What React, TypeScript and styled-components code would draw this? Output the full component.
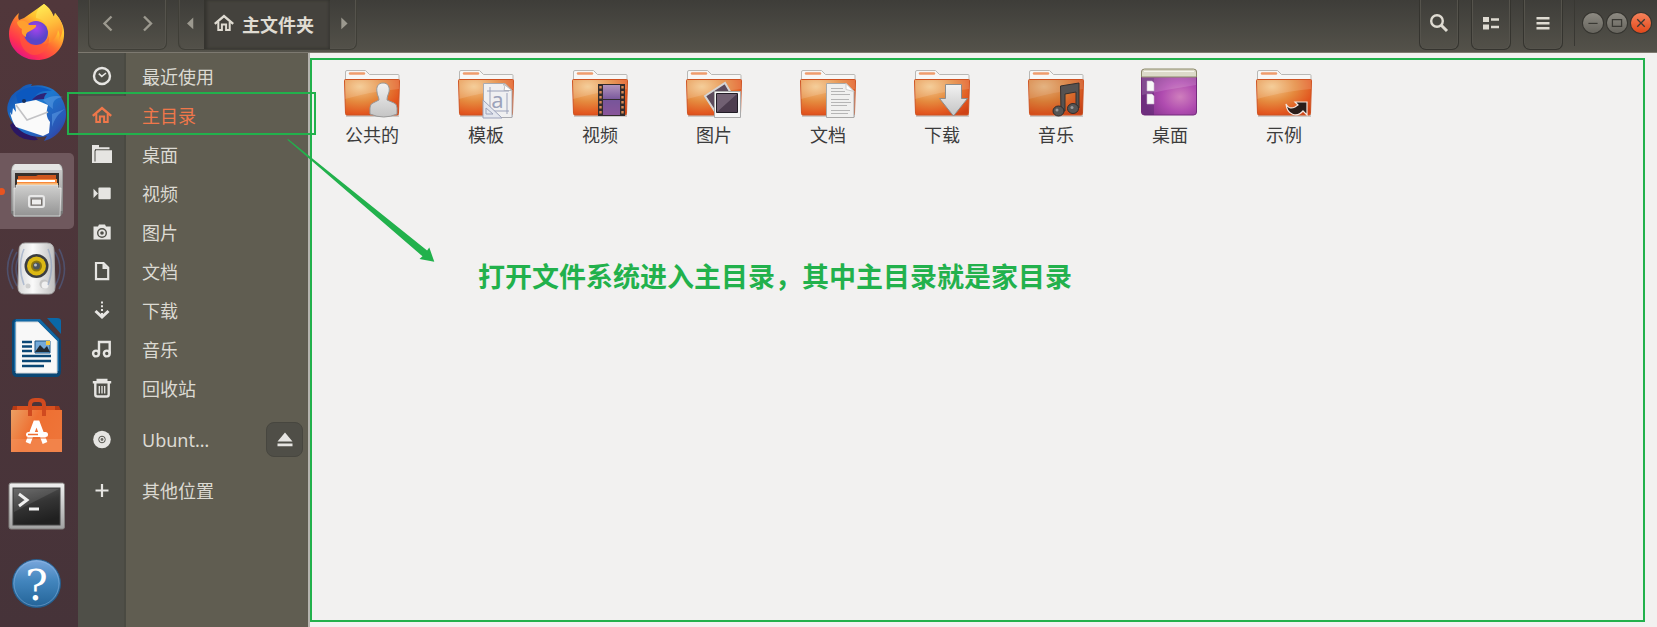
import React from 'react';
import styled, { createGlobalStyle, css } from 'styled-components';

const GREEN = '#22b14c';

const GlobalStyle = createGlobalStyle`
  * { box-sizing: border-box; }
  body {
    margin: 0;
    font-family: "Noto Sans", "Noto Sans CJK SC", sans-serif;
    font-size: 18px;
    background: #f2f1f0;
  }
  button { font: inherit; color: inherit; padding: 0; border: 0; background: none; }
  ul { list-style: none; margin: 0; padding: 0; }
  svg { display: block; flex: none; }
`;

const Desktop = styled.div`
  display: grid;
  grid-template-columns: 78px 1fr;
  min-height: 100vh;
`;

/* ---------- dock ---------- */

const Dock = styled.nav`
  background: linear-gradient(#51373b, #463339);
  overflow: hidden;
`;

const DockList = styled.ul`
  display: flex;
  flex-direction: column;
  gap: 3px;
  margin-top: -5px;
`;

const DockButton = styled.button<{ $active?: boolean }>`
  position: relative;
  display: block;
  width: 74px;
  height: 76px;
  border-radius: 0 5px 5px 0;
  ${(p) =>
    p.$active &&
    css`
      background: #6f585d;
      &::before {
        content: '';
        position: absolute;
        left: -2px;
        top: 35px;
        width: 7px;
        height: 7px;
        border-radius: 50%;
        background: #e95420;
      }
    `}
`;

/* ---------- window ---------- */

const Window = styled.div`
  display: flex;
  flex-direction: column;
  min-width: 0;
`;

const HeaderBar = styled.header`
  display: flex;
  align-items: flex-start;
  gap: 11px;
  height: 53px;
  padding: 0 6px 0 10px;
  color: #dfdbd2;
  background: linear-gradient(#3e3d39, #54524a);
  border-bottom: 1px solid #7d7970;
`;

const ButtonGroup = styled.div`
  display: flex;
  height: 50px;
  border: 1px solid #3f3e37;
  border-top: 0;
  border-radius: 0 0 7px 7px;
  box-shadow: inset -1px -1px 0 #55534c, inset 1px 0 0 #4d4b45;
`;

const GroupButton = styled.button<{ $width: number }>`
  display: flex;
  align-items: center;
  justify-content: center;
  width: ${(p) => p.$width}px;
  padding-bottom: 4px;
  color: #9c998f;
`;

const PathButton = styled.button`
  display: flex;
  align-items: center;
  gap: 6px;
  padding: 0 16px 4px 8px;
  font-weight: 700;
  background: #44423d;
  box-shadow: inset 3px 0 3px #35342f, inset -2px 0 2px #3b3a35;
`;

const PathText = styled.span`
  padding-top: 4px;
  line-height: 24px;
`;

const Tools = styled.div`
  display: flex;
  gap: 12px;
  margin-left: auto;
`;

const ToolButton = styled.button`
  display: flex;
  align-items: center;
  justify-content: center;
  width: 40px;
  height: 50px;
  padding-bottom: 4px;
  border: 1px solid #35342f;
  border-top: 0;
  border-radius: 0 0 7px 7px;
  box-shadow: inset -1px -1px 0 #55534c, inset 1px 0 0 #55534c;
`;

const WindowControls = styled.div`
  display: flex;
  gap: 4px;
  height: 46px;
  padding: 13px 0 0 8px;
  border-left: 1px solid #393833;
`;

const ControlButton = styled.button<{ $close?: boolean }>`
  width: 20px;
  height: 20px;
  border-radius: 50%;
  color: #3a3934;
  background: ${(p) => (p.$close ? 'linear-gradient(#f5825b, #e2481a)' : 'linear-gradient(#8d8a82, #66645d)')};
  box-shadow: 0 0 0 1px #35342f;
`;

const Body = styled.div`
  display: flex;
  flex: 1;
`;

/* ---------- sidebar ---------- */

const Sidebar = styled.nav`
  position: relative;
  display: flex;
  flex-direction: column;
  gap: 12px;
  width: 230px;
  flex: none;
  padding-top: 4px;
  color: #dcdad3;
  background: linear-gradient(90deg, #4f4f48 46px, #4a4a42 46px, #4a4a42 48px, #605d51 48px);
`;

const Place = styled.li<{ $selected?: boolean }>`
  position: relative;
  display: flex;
  align-items: center;
  height: 39px;
  padding-right: 5px;
  ${(p) =>
    p.$selected &&
    css`
      color: #f0774a;
      background: #605d51;
      &::after {
        content: '';
        position: absolute;
        z-index: 2;
        inset: -4px -8px 0 -11px;
        border: 2px solid ${GREEN};
        pointer-events: none;
      }
    `}
`;

const PlaceLink = styled.a`
  display: flex;
  align-items: center;
  flex: 1;
  color: inherit;
  text-decoration: none;
  line-height: 24px;
`;

const PlaceIcon = styled.span<{ $selected?: boolean }>`
  display: flex;
  justify-content: center;
  width: 48px;
  margin-right: 16px;
  padding-bottom: 1px;
  color: ${(p) => (p.$selected ? '#f0774a' : '#e6e5e2')};
`;

const EjectButton = styled.button`
  display: flex;
  align-items: center;
  justify-content: center;
  width: 37px;
  height: 35px;
  border: 1px solid #47463f;
  border-radius: 8px;
  color: #e6e5e2;
  background: #4f4e47;
`;

/* ---------- files ---------- */

const Main = styled.main`
  display: flex;
  flex: 1;
  min-width: 0;
  padding: 5px 12px 5px 0;
  border-left: 2px solid #b5b3ae;
`;

const Frame = styled.section`
  flex: 1;
  min-width: 0;
  border: 2px solid ${GREEN};
`;

const FileGrid = styled.ul`
  display: flex;
  flex-wrap: wrap;
  padding: 5px 3px;
`;

const FileItem = styled.li`
  display: flex;
  flex-direction: column;
  align-items: center;
  gap: 2px;
  width: 114px;
  color: #3c3c3c;
  line-height: 24px;
`;

const Note = styled.p`
  margin: 105px 0 0 166px;
  color: ${GREEN};
  font-size: 27px;
  font-weight: 700;
  line-height: 40px;
`;

const Arrow = styled.svg`
  position: absolute;
  z-index: 3;
  left: 208px;
  top: 85px;
  pointer-events: none;
`;

/* ---------- symbolic icons ---------- */

const Sym = ({ children, size = 24 }: { children: React.ReactNode; size?: number }) => (
  <svg width={size} height={size} viewBox="0 0 24 24" fill="none" stroke="currentColor" strokeWidth="2.4" aria-hidden="true">
    {children}
  </svg>
);
const solid = { fill: 'currentColor', stroke: 'none' };

const HomeIcon = () => (
  <Sym>
    <path d="M2.800 12.800 12 5l9.200 7.800" />
    <path d="M6.300 11v8h3.600v-5.500h4.200V19h3.600v-8" strokeWidth="2" />
  </Sym>
);
const ClockIcon = () => (
  <Sym><circle cx="12" cy="12" r="8" /><path d="m8.800 9.600 3 2.800 4.200-3.400" strokeWidth="1.600" /></Sym>
);
const FolderIcon = () => (
  <Sym>
    <path {...solid} d="M2 3h7v2.300h10.500v2H5V21H2z" />
    <path {...solid} d="M6 8.300h16V21H4.500V9.500z" />
    <path d="M5 19.500V8.300h1" strokeWidth="1" stroke="#4f4f48" />
  </Sym>
);
const VideoIcon = () => (
  <Sym><rect {...solid} x="8.400" y="6.500" width="12.300" height="11.800" rx="1" /><path {...solid} d="M3.500 7.800 8 12.400l-4.500 4.600z" /></Sym>
);
const CameraIcon = () => (
  <Sym>
    <path {...solid} fillRule="evenodd" d="M3.500 6.500H8l1-2h6l1 2h4.700v13H3.500zM12 8a5 5 0 1 0 0 10 5 5 0 0 0 0-10z" />
    <circle cx="12" cy="13" r="2.700" strokeWidth="1.800" />
  </Sym>
);
const DocIcon = () => (
  <Sym><path d="M6 4h7.500l4.700 4.700v11.400H6z" strokeWidth="2.200" /><path {...solid} d="M12.500 4v6h6z" /></Sym>
);
const DownIcon = () => (
  <Sym><path d="M12 3.500v14" strokeDasharray="2 1.800" strokeWidth="2" /><path d="m5.500 13 6.500 6 6.500-6" strokeWidth="3" /></Sym>
);
const MusicIcon = () => (
  <Sym><circle cx="6" cy="16.500" r="2.900" /><circle cx="16.800" cy="16.500" r="2.900" /><path d="M9 16.500V5h10.700v11.500" /></Sym>
);
const TrashIcon = () => (
  <Sym>
    <path d="M2.800 6.300h18.400M6.500 4h11" />
    <path d="M5.300 7v11.500q0 2 2 2h9.400q2 0 2-2V7" />
    <path d="M9.300 10v7.500M12 10v7.500M14.700 10v7.500" strokeWidth="1.300" />
  </Sym>
);
const DiscIcon = () => (
  <Sym><circle {...solid} cx="12" cy="12.500" r="8.800" /><circle cx="12" cy="12.500" r="3.300" stroke="#56564f" strokeWidth="1" /><circle {...solid} cx="12" cy="12.500" r="1.400" fill="#6a6963" /></Sym>
);
const PlusIcon = () => <Sym><path d="M12 6v13M5.500 12.500h13" strokeWidth="2.200" /></Sym>;

/* ---------- dock artwork ---------- */

const Art = ({ children }: { children: React.ReactNode }) => (
  <svg width="74" height="76" viewBox="0 0 74 76" aria-hidden="true">{children}</svg>
);

const Firefox = () => (
  <Art>
    <defs>
      <linearGradient id="fxBody" x1=".85" y1=".1" x2=".25" y2="1">
        <stop offset="0" stopColor="#fff04d" /><stop offset=".3" stopColor="#ffc02e" /><stop offset=".55" stopColor="#ff6b32" /><stop offset=".8" stopColor="#ff3150" /><stop offset="1" stopColor="#e0118a" />
      </linearGradient>
      <radialGradient id="fxGlobe" cx=".5" cy=".3"><stop offset="0" stopColor="#a743f0" /><stop offset="1" stopColor="#5a45c8" /></radialGradient>
      <linearGradient id="fxTail" x1="0" y1="0" x2=".3" y2="1"><stop offset="0" stopColor="#fff257" /><stop offset=".6" stopColor="#ffbd3b" /><stop offset="1" stopColor="#ff8a2c" /></linearGradient>
    </defs>
    <g transform="translate(0 -1)">
      <path fill="url(#fxBody)" d="M19 19c-1 3-1 5 0 7l5-2 20-14c5 4 7 8 10 13l1-4c6 7 10 14 9 23-1 14-12 24-27 24S9 55 9 40c0-8 4-16 10-21z" />
      <path fill="url(#fxTail)" d="M44 10c-6 4-8 8-8 14 6 1 10 4 12 10 2 7-1 12-5 16 8 0 14-6 15-14 2 3 2 7 1 10 7-12 3-19-4-27l-1 4c-2-5-4-9-10-13z" />
      <circle cx="36" cy="39" r="12" fill="url(#fxGlobe)" />
      <path fill="#ff9f2f" d="M17 28c5-3 10-1 12 3h7c1 2-2 4-6 6-4 2-4 3-4 6-4-2-5-5-4-8-2-1-5-4-5-7z" />
      <path fill="#ff5b35" opacity=".6" d="M21 35c1 10 7 17 16 16 6 0 10-4 12-9 1 12-6 19-15 19-10-1-17-13-13-26z" />
    </g>
  </Art>
);

const Thunderbird = () => (
  <Art>
    <defs>
      <linearGradient id="tbBody" x1="0" y1="0" x2="1" y2="1"><stop offset="0" stopColor="#164aa8" /><stop offset=".45" stopColor="#1d78cf" /><stop offset=".8" stopColor="#2a55b5" /><stop offset="1" stopColor="#3c2d8c" /></linearGradient>
    </defs>
    <g transform="translate(0 1)">
      <path fill="#2b1763" d="M10 50c4 12 16 16 28 15L20 42z" />
      <path fill="url(#tbBody)" d="M20 14c4-4 8-5 12-5l-1 2c15-3 27 4 32 15 4 9 4 18 0 25-4 8-11 13-19 15l3-5c-9 3-24-1-30-9C8 44 5 34 9 26c2-6 6-9 11-12z" />
      <path fill="#0c58bf" d="M16 20c8-9 22-11 36-4-10-1-16 2-19 9-5 4-10 5-15 4z" />
      <path fill="#2e2377" d="M32 25c4-5 9-7 15-7-2 2-3 4-3 6z" />
      <path fill="#fafafa" d="m15 29 21-4 12 5c-2 7-2 12 2 17l-1 11-6 3-27-9c-3-4-5-10-6-15l2 3 1-7 3 4z" />
      <path fill="none" stroke="#c2c2c5" strokeWidth="1.600" d="m16 30 11 15 21-8" />
      <circle cx="24" cy="26" r="2" fill="#17305e" />
      <path fill="#5c9ce4" opacity=".55" d="M43 25c7-4 13-5 20-3-8 1-11 4-10 12-3-2-6-5-10-9zM52 39l13-5c-7 5-10 9-13 18z" />
    </g>
  </Art>
);

const Files = () => (
  <Art>
    <defs><linearGradient id="cab" x1="0" y1="0" x2="0" y2="1"><stop offset="0" stopColor="#d0d0cf" /><stop offset="1" stopColor="#939393" /></linearGradient></defs>
    <path fill="#777" d="M11 18q0-6 4-7h44q4 1 4 7v42l-3 4H14l-3-4z" />
    <path fill="url(#cab)" d="M11.500 18q0-6 4-7h43q4 1 4 7v40h-51z" />
    <path fill="#e4e4e3" d="M15 11h44l3 6H12z" />
    <path fill="#37302c" d="M15 20h44v16H15z" />
    <path fill="#cf571e" d="M18 23h18l2-1h18v11H18z" /><path fill="#f7873b" d="M17 26h40v4H17z" />
    <path fill="#fff" d="M17 27h38v2H17z" /><path fill="#fbb66e" d="M17 30h41v5H17z" />
    <path fill="url(#cab)" stroke="#ededec" strokeWidth=".7" d="M14 35h2v-3h42v3h3l-1 28H14z" />
    <rect x="29" y="43" width="15" height="11" rx="2" fill="#a9a9a9" stroke="#e8e8e8" strokeWidth="2" />
    <rect x="31.500" y="46" width="10" height="6" fill="#eee" stroke="#77716c" />
  </Art>
);

const Rhythmbox = () => (
  <Art>
    <defs><linearGradient id="spk" x1="0" x2="1"><stop offset="0" stopColor="#d8d8d8" /><stop offset=".4" stopColor="#fafafa" /><stop offset="1" stopColor="#bdbdbd" /></linearGradient></defs>
    <g fill="none" stroke="#526b9e" strokeWidth="1.600" opacity=".5">
      <path d="M13 17q-11 20 0 40M17 20q-10 17 0 34M21 21q-10 16 0 32M59 17q11 20 0 40M55 20q10 17 0 34" />
    </g>
    <path fill="url(#spk)" stroke="#aaa" d="M25 11h22q7 0 7 8l1 36q0 7-6 7H24q-6 0-6-7l1-36q0-8 6-8z" />
    <circle cx="36.500" cy="34" r="12" fill="#3b3d40" /><circle cx="36.500" cy="34" r="9.500" fill="#dcb914" />
    <circle cx="36.500" cy="34" r="5.500" fill="#8c7610" /><circle cx="36.500" cy="34" r="3.500" fill="#4d555d" />
    <circle cx="35.500" cy="33" r="1.500" fill="#bbc0c4" />
    <circle cx="28" cy="54" r="2.500" fill="#d0d0d0" /><circle cx="44" cy="52" r="4.500" fill="#c5c5c5" /><circle cx="45" cy="53" r="3.500" fill="#f0f0f0" />
    <path fill="none" stroke="#7c93bc" opacity=".5" strokeWidth="1.500" d="M24 17q-7 17 0 36M48 17q7 17 0 36" />
  </Art>
);

const Writer = () => (
  <Art>
    <path fill="#0a4775" d="M16 8h24l21 21v31q0 6-5 6H17q-5 0-5-6V12q0-4 4-4z" />
    <path fill="#1268a5" d="M16 8h24l19 20v32H14V12z" />
    <path fill="#0a68a8" d="M47 7h10q4 0 4 3v13z" />
    <path fill="#f8f8f8" stroke="#d3d7da" d="M16 11h22l19 19v32H16z" />
    <path stroke="#0a4775" strokeWidth="2.400" d="M22 31h10M22 35.500h10M22 40h10M22 45h29M22 50h29M22 55h22" />
    <path fill="#73a9d8" stroke="#1d5685" d="M35 30h15v12H35z" /><path fill="#222b33" d="m35 41 5-7 4 4 3-3 3 6z" /><path fill="#efc742" d="M46 30h4v4h-4z" />
  </Art>
);

const Software = () => (
  <Art>
    <defs><linearGradient id="bag" x1="0" y1="0" x2="1" y2=".4"><stop offset="0" stopColor="#eca064" /><stop offset=".5" stopColor="#ee6f31" /><stop offset="1" stopColor="#ee7438" /></linearGradient></defs>
    <g transform="translate(0 -4)">
      <path fill="#b53b16" d="M13 20h46l3 7H11z" /><path fill="#d7501f" d="M17 20h38v5H17z" />
      <path fill="url(#bag)" d="M11 24h51v42H11z" /><path fill="#f58f5a" opacity=".55" d="M11 53h51v13H11z" />
      <path fill="none" stroke="#d04a1f" strokeWidth="4" d="M30 30V19q0-5 5-5h4q5 0 5 5v11" />
      <path fill="none" stroke="#fff" strokeWidth="5" d="m28 57 7.500-20h2L45 57" />
      <rect x="26" y="46" width="22" height="5" rx="2.500" fill="#fff" /><path stroke="#ee6f31" strokeWidth="1.500" d="M28 48.500h10" />
      <path stroke="#ee6f31" strokeWidth="1" d="M27 52h19" />
    </g>
  </Art>
);

const Terminal = () => (
  <Art>
    <defs>
      <linearGradient id="tFrame" x1="0" y1="0" x2="0" y2="1"><stop offset="0" stopColor="#f0f0f0" /><stop offset="1" stopColor="#a1a1a1" /></linearGradient>
      <linearGradient id="tScreen" x1="0" y1="0" x2=".3" y2="1"><stop offset="0" stopColor="#5c5c5c" /><stop offset=".5" stopColor="#353535" /><stop offset="1" stopColor="#202020" /></linearGradient>
    </defs>
    <g transform="translate(0 -1)">
      <rect x="9" y="15" width="55.500" height="46" rx="2" fill="url(#tFrame)" stroke="#83807f" />
      <rect x="13" y="20" width="47" height="37" fill="url(#tScreen)" stroke="#444" />
      <path fill="#fff" opacity=".1" d="M14 21h45L14 44z" />
      <path fill="none" stroke="#f0f0f0" strokeWidth="3" d="m19 26 8 6-8 6M29 41h10" />
    </g>
  </Art>
);

const Help = () => (
  <Art>
    <defs><linearGradient id="hlp" x1="0" y1="0" x2="0" y2="1"><stop offset="0" stopColor="#7aa7dd" /><stop offset=".45" stopColor="#4285bd" /><stop offset="1" stopColor="#236397" /></linearGradient></defs>
    <circle cx="36.500" cy="35.500" r="24" fill="url(#hlp)" stroke="#235c8c" />
    <circle cx="36.500" cy="35.500" r="22.500" fill="none" stroke="#9dc1e8" opacity=".4" />
    <text x="36.500" y="52" textAnchor="middle" fill="#fff" fontFamily="DejaVu Serif" fontSize="42">?</text>
  </Art>
);

const dockApps = [
  { name: 'Firefox', art: <Firefox /> },
  { name: 'Thunderbird', art: <Thunderbird /> },
  { name: '文件', art: <Files />, active: true },
  { name: 'Rhythmbox', art: <Rhythmbox /> },
  { name: 'LibreOffice Writer', art: <Writer /> },
  { name: 'Ubuntu Software', art: <Software /> },
  { name: '终端', art: <Terminal /> },
  { name: '帮助', art: <Help /> },
];

/* ---------- folder artwork ---------- */

const FolderArt = ({ children }: { children?: React.ReactNode }) => (
  <svg width="64" height="56" viewBox="0 0 64 56" aria-hidden="true">
    <path fill="#f7f7f6" stroke="#b9b8b5" d="M5.500 16V7q0-1.500 1.500-1.500h18.500l4 4H58q1 0 1 1V16z" />
    <path stroke="#ef9c6c" strokeWidth="2.400" strokeLinecap="round" d="M10 8.500h14" />
    <path fill="#9b9894" opacity=".45" d="M6 49h53v3H6z" />
    <path fill="url(#folder)" stroke="#cf5322" d="M4.500 15.500q0-1 1-1h53q1 0 1 1l-1 33q0 1.500-1.500 1.500H7q-1.500 0-1.500-1.500z" />
    <path fill="#fff" opacity=".14" d="M5 15h54v9Q34 26 5 34z" />
    {children}
  </svg>
);

const SharedGradients = styled.svg`
  position: absolute;
`;

const FolderDefs = () => (
  <SharedGradients width="0" height="0" aria-hidden="true">
    <defs>
      <radialGradient id="folder" cx=".28" cy=".2" r=".95"><stop offset="0" stopColor="#f3c68a" /><stop offset=".45" stopColor="#e58a3e" /><stop offset=".8" stopColor="#e2561f" /><stop offset="1" stopColor="#cf4216" /></radialGradient>
      <linearGradient id="silver" x1="0" y1="0" x2="0" y2="1"><stop offset="0" stopColor="#f2f2f2" /><stop offset="1" stopColor="#c4c4c4" /></linearGradient>
      <radialGradient id="desk" cx=".7" cy=".6" r=".65"><stop offset="0" stopColor="#cf7fbd" /><stop offset=".5" stopColor="#b04cb0" /><stop offset="1" stopColor="#86348f" /></radialGradient>
      <linearGradient id="film" x1="0" y1="0" x2="0" y2="1"><stop offset="0" stopColor="#b294bd" /><stop offset=".5" stopColor="#77559a" /><stop offset="1" stopColor="#89559a" /></linearGradient>
    </defs>
  </SharedGradients>
);

const fileItems = [
  {
    name: '公共的',
    art: <FolderArt><path fill="url(#silver)" stroke="#999" d="M43 18c5 0 7 4 6 9-1 3-2 5-2 8l7 3q3 1 3 5v6q-13 6-27 0v-6q0-4 3-5l6-3c0-3-2-5-2-8-1-5 1-9 6-9z" /></FolderArt>,
  },
  {
    name: '模板',
    art: (
      <FolderArt>
        <path fill="#f0f0f1" stroke="#aaabb0" d="M29.500 18.500H51l7 7v27H29.500z" /><path fill="#fff" stroke="#bbb" d="M49 18.500q3 3 1 7h8z" />
        <path stroke="#9ba2ba" d="M33 26h22M33 46h22M36 22v26M53 28v21" />
        <text x="43.500" y="43" textAnchor="middle" fill="#9ba2ba" fontFamily="Noto Sans" fontSize="22">a</text>
        <path fill="#e3e6ee" stroke="#9ba2ba" d="M29 35v18h19zM32 43v6h7z" />
      </FolderArt>
    ),
  },
  {
    name: '视频',
    art: (
      <FolderArt>
        <path fill="#332c2d" d="M30 19h27v32H30z" /><path fill="url(#film)" d="M35 20h17v14H35zM35 35h17v15H35z" />
        <path stroke="#d98a55" strokeWidth="2.400" strokeDasharray="2.500 2.500" d="M32.500 21v29M54.500 21v29" />
      </FolderArt>
    ),
  },
  {
    name: '图片',
    art: (
      <FolderArt>
        <path fill="#5b4a5b" stroke="#d4d4d4" strokeWidth="2" d="m23 31 20-13 10 17-19 13z" />
        <path fill="#f6f6f6" stroke="#aaa" d="M32.500 26.500h26v26h-26z" /><path fill="#4d3d4f" stroke="#211c25" d="M34.500 28.500h21v19h-21z" /><path fill="#a796a7" opacity=".4" d="M35 29h20L35 47z" />
      </FolderArt>
    ),
  },
  {
    name: '文档',
    art: (
      <FolderArt>
        <path fill="#f0f0ef" stroke="#a9a9a8" d="M30.500 18.500H50l8 8v26H30.500z" /><path fill="#fff" stroke="#ccc" d="M50 18.500v6l8 2z" />
        <path stroke="#b5b5b5" d="M35 23.500h12M35 26.500h14M35 29.500h19M35 34.500h18M35 37.500h20M35 40.500h16M35 45.500h19M35 48.500h17" />
      </FolderArt>
    ),
  },
  { name: '下载', art: <FolderArt><path fill="url(#silver)" stroke="#8d8d8d" d="M35.500 19.500h16v14h6L43.500 51 29.500 33.500h6z" /></FolderArt> },
  {
    name: '音乐',
    art: (
      <FolderArt>
        <path fill="#9b3f18" opacity=".18" d="M5 15h54v34H6z" />
        <path fill="#555251" stroke="#34302f" d="M36.500 21 55 18v25h-3V27l-11 2v17h-4z" />
        <ellipse cx="34.500" cy="46" rx="5.500" ry="5" fill="#555" stroke="#302d2c" /><ellipse cx="49" cy="43.500" rx="5.500" ry="5" fill="#555" stroke="#302d2c" />
        <circle cx="33" cy="45" r="1.500" fill="#999" /><circle cx="48" cy="42.500" r="1.500" fill="#999" />
      </FolderArt>
    ),
  },
  {
    name: '桌面',
    art: (
      <svg width="64" height="56" viewBox="0 0 64 56" aria-hidden="true">
        <rect x="3.500" y="4.500" width="55" height="45.500" rx="3" fill="url(#desk)" stroke="#752a7c" />
        <path fill="#37205a" opacity=".3" d="M4 13h12v37H6l-2-3z" /><path fill="#fff" opacity=".14" d="M4 12h54v8Q31 24 4 30z" />
        <path fill="#dcdac9" stroke="#8c8a6a" d="M3.500 12V7q0-3 3-3h49q3 0 3 3v5z" /><path stroke="#f5f5ec" d="M6 6.500h50" />
        <path fill="#f8f8f8" stroke="#c9b4cd" strokeWidth=".6" d="M9 16h5l2 2v8H9zM9 29h5l2 2v8H9z" />
      </svg>
    ),
  },
  { name: '示例', art: <FolderArt><path fill="#2a1d1a" stroke="#f4e7e0" strokeWidth="1.200" d="M34 39q3 6 9 3l3-2-3-3h12v13l-4-4c-6 7-16 4-17-7z" /></FolderArt> },
];

const places = [
  { name: '最近使用', icon: <ClockIcon /> },
  { name: '主目录', icon: <HomeIcon />, selected: true },
  { name: '桌面', icon: <FolderIcon /> },
  { name: '视频', icon: <VideoIcon /> },
  { name: '图片', icon: <CameraIcon /> },
  { name: '文档', icon: <DocIcon /> },
  { name: '下载', icon: <DownIcon /> },
  { name: '音乐', icon: <MusicIcon /> },
  { name: '回收站', icon: <TrashIcon /> },
];

type PlaceRowProps = { name: string; icon: React.ReactNode; selected?: boolean; children?: React.ReactNode };

const PlaceRow = ({ name, icon, selected, children }: PlaceRowProps) => (
  <Place $selected={selected}>
    <PlaceLink href="#" aria-current={selected ? 'page' : undefined}>
      <PlaceIcon $selected={selected}>{icon}</PlaceIcon>
      {name}
    </PlaceLink>
    {children}
  </Place>
);

export default function App() {
  return (
    <Desktop lang="zh-CN">
      <GlobalStyle />
      <FolderDefs />
      <Dock aria-label="Dock">
        <DockList>
          {dockApps.map((app) => (
            <li key={app.name}>
              <DockButton $active={app.active} aria-label={app.name}>{app.art}</DockButton>
            </li>
          ))}
        </DockList>
      </Dock>
      <Window>
        <HeaderBar>
          <ButtonGroup>
            <GroupButton $width={39} aria-label="后退"><Sym><path d="m14.500 5.500-7 7 7 7" /></Sym></GroupButton>
            <GroupButton $width={38} aria-label="前进"><Sym><path d="m9 5.500 7 7-7 7" /></Sym></GroupButton>
          </ButtonGroup>
          <ButtonGroup>
            <GroupButton $width={25} aria-label="上一级"><Sym size={20}><path {...solid} d="M13.500 5.500v14L6 12.500z" /></Sym></GroupButton>
            <PathButton><HomeIcon /><PathText>主文件夹</PathText></PathButton>
            <GroupButton $width={26} aria-label="下一级"><Sym size={20}><path {...solid} d="M10 5.500v14l7.500-7z" /></Sym></GroupButton>
          </ButtonGroup>
          <Tools>
            <ToolButton aria-label="搜索"><Sym><circle cx="10" cy="10" r="5.800" /><path d="m14 14 6 6" strokeWidth="3" /></Sym></ToolButton>
            <ToolButton aria-label="列表视图"><Sym><path {...solid} d="M4 6h6v5H4zM4 13.500h6v5H4zM12 7.300h8v2.400h-8zM12 14.800h8v2.400h-8z" /></Sym></ToolButton>
            <ToolButton aria-label="菜单"><Sym><path {...solid} d="M5.500 6h13v2.500h-13zM5.500 11h13v2.500h-13zM5.500 16h13v2.500h-13z" /></Sym></ToolButton>
          </Tools>
          <WindowControls>
            <ControlButton aria-label="最小化"><Sym size={20}><path d="M6.500 12.500h11" strokeWidth="1.400" /></Sym></ControlButton>
            <ControlButton aria-label="最大化"><Sym size={20}><path d="M6.500 8h11v8h-11z" strokeWidth="1.500" /></Sym></ControlButton>
            <ControlButton $close aria-label="关闭"><Sym size={20}><path d="m7.500 7.500 9 9m0-9-9 9" strokeWidth="1.600" /></Sym></ControlButton>
          </WindowControls>
        </HeaderBar>
        <Body>
          <Sidebar aria-label="位置">
            <ul>{places.map((p) => <PlaceRow key={p.name} {...p} />)}</ul>
            <ul>
              <PlaceRow name="Ubunt…" icon={<DiscIcon />}>
                <EjectButton aria-label="弹出"><Sym><path {...solid} d="m12 4.500 7.500 9h-15zM4.500 15.500h15v2.700h-15z" /></Sym></EjectButton>
              </PlaceRow>
            </ul>
            <ul><PlaceRow name="其他位置" icon={<PlusIcon />} /></ul>
            <Arrow width="152" height="128" viewBox="0 0 152 128" aria-hidden="true">
              <path fill={GREEN} d="m1.300 1.800.8-.9 139 111.500 2.200-2.900 5 14.200-14.800-2.700 3-2.700z" />
            </Arrow>
          </Sidebar>
          <Main>
            <Frame>
              <FileGrid>
                {fileItems.map((f) => <FileItem key={f.name}>{f.art}{f.name}</FileItem>)}
              </FileGrid>
              <Note>打开文件系统进入主目录，其中主目录就是家目录</Note>
            </Frame>
          </Main>
        </Body>
      </Window>
    </Desktop>
  );
}
